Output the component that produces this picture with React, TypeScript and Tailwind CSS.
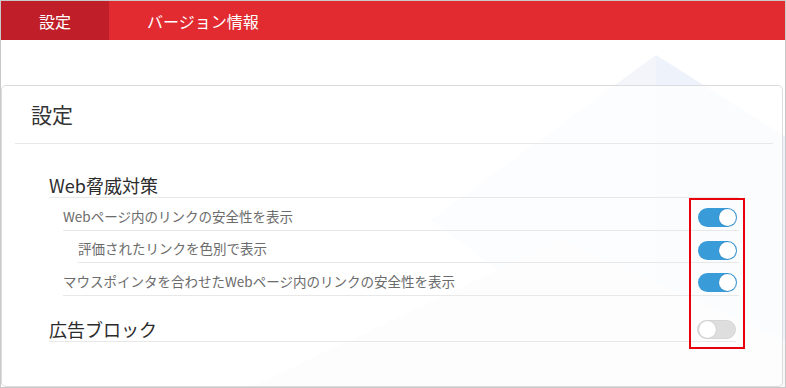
import React from 'react'

const FONT = { fontFamily: '"Noto Sans CJK JP", "Noto Sans", sans-serif' }

function Toggle({ on }: { on: boolean }) {
  return (
    <div
      className={`mt-[4px] flex h-[19px] w-[39px] shrink-0 items-center rounded-full px-[1px] ${
        on ? 'justify-end bg-[#3a9bd9]' : 'justify-start border border-[#d6d6d6] bg-[#dedede]'
      }`}
    >
      <div className={`h-[17px] w-[17px] rounded-full bg-white ${on ? 'shadow-[0_0_1px_#1d6fa5]' : 'shadow-[0_0_1px_#aaa]'}`} />
    </div>
  )
}

function Row({ label, indent, h }: { label: string; indent: string; h: string }) {
  return (
    <div className={`flex ${h} ${indent} items-center justify-between border-b border-[#e8e8e8] pt-[3px] pr-[2px]`}>
      <span className="text-[13.5px] leading-5 text-[#6b6b6b]">{label}</span>
      <Toggle on />
    </div>
  )
}

export default function App() {
  return (
    <div className="relative h-[388px] w-[786px] overflow-hidden border border-[#c9c9c9] bg-white" style={FONT}>
      {/* tabs */}
      <div className="flex h-[39px] bg-[#e12b31] text-[16px] text-white">
        <div className="flex w-[108px] items-center justify-center bg-[#c01f29]">設定</div>
        <div className="flex items-center px-[38px]">バージョン情報</div>
      </div>

      <div className="relative pt-[45px] pr-[2px]">
        {/* background decoration */}
        <svg className="absolute inset-0 h-full w-full" viewBox="0 0 784 347" preserveAspectRatio="none">
          <polygon points="655,15 430,180 655,347" fill="#f3f5fb" />
          <polygon points="655,15 900,170 760,347 655,347" fill="#edf2fb" />
          <polygon points="250,347 560,200 784,300 784,347" fill="#f6f8fc" />
        </svg>

        <div className="relative h-[302px] rounded-[5px] border border-[#dcdcdc] bg-white/75">
          <div className="ml-[13px] mr-[9px] flex h-[58px] items-center border-b border-[#e8e8e8] pl-[16px] text-[21px] text-[#333]">
            設定
          </div>

          <div className="ml-[47px] mr-[43px]">
            <div className="mt-[29px] flex h-[25px] items-center border-b border-[#e8e8e8] text-[18px] leading-6 text-[#2b2b2b]">
              Web脅威対策
            </div>
            <Row label="Webページ内のリンクの安全性を表示" indent="ml-[14px]" h="h-[33px]" />
            <Row label="評価されたリンクを色別で表示" indent="ml-[29px]" h="h-[32px]" />
            <Row label="マウスポインタを合わせたWebページ内のリンクの安全性を表示" indent="ml-[14px]" h="h-[33px]" />

            <div className="mt-[20px] mr-[3px] flex h-[26px] items-center justify-between border-b border-[#e8e8e8] pr-[0px] text-[18px] leading-6 text-[#2b2b2b]">
              <span>広告ブロック</span>
              <div className="-mt-[2px]">
                <Toggle on={false} />
              </div>
            </div>
          </div>
        </div>
      </div>

      {/* highlight annotation */}
      <div className="absolute left-[688px] top-[197px] h-[151px] w-[56px] border-2 border-[#e8000b]" />
    </div>
  )
}
